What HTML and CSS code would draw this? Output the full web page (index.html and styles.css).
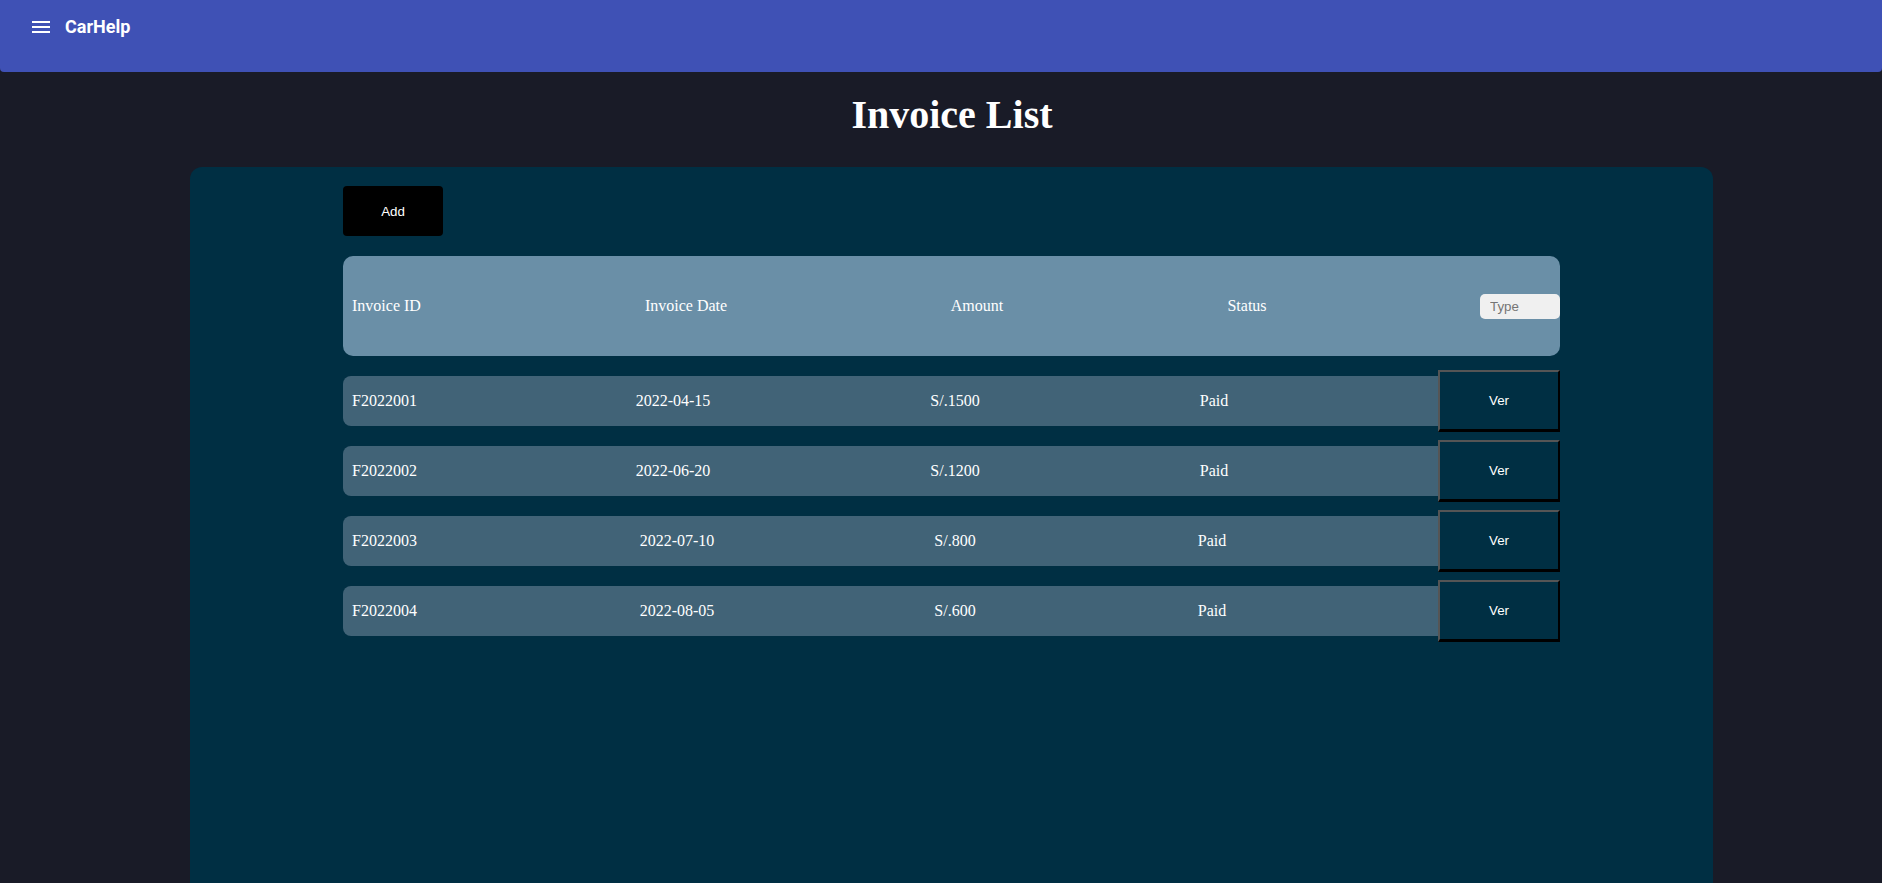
FILE: index.html
```html
<!DOCTYPE html>
<html lang="en">
<head>
<meta charset="utf-8">
<title>CarHelp - Invoice List</title>
<link rel="stylesheet" href="styles.css">
</head>
<body>
<header class="toolbar">
  <svg class="menu-icon" viewBox="0 0 24 24" width="24" height="24" aria-hidden="true"><path fill="#fff" d="M3 18h18v-2H3v2zm0-5h18v-2H3v2zm0-7v2h18V6H3z"/></svg>
  <span class="brand">CarHelp</span>
</header>
<h1 class="title">Invoice List</h1>
<main class="card">
  <div class="inner">
    <button class="add-btn">Add</button>
    <div class="thead">
      <span class="c-id">Invoice ID</span>
      <span class="c-date">Invoice Date</span>
      <span class="c-amount">Amount</span>
      <span class="c-status">Status</span>
      <input class="type-input" type="text" placeholder="Type">
    </div>
    <div class="rows">
      <div class="row">
        <div class="cells"><span>F2022001</span><span>2022-04-15</span><span>S/.1500</span><span>Paid</span></div>
        <button class="ver-btn">Ver</button>
      </div>
      <div class="row">
        <div class="cells"><span>F2022002</span><span>2022-06-20</span><span>S/.1200</span><span>Paid</span></div>
        <button class="ver-btn">Ver</button>
      </div>
      <div class="row">
        <div class="cells cells-short"><span>F2022003</span><span>2022-07-10</span><span>S/.800</span><span>Paid</span></div>
        <button class="ver-btn">Ver</button>
      </div>
      <div class="row">
        <div class="cells cells-short"><span>F2022004</span><span>2022-08-05</span><span>S/.600</span><span>Paid</span></div>
        <button class="ver-btn">Ver</button>
      </div>
    </div>
  </div>
</main>
</body>
</html>
```
FILE: styles.css
```css
html, body {
  margin: 0;
  padding: 0;
  background: #191b27;
  font-family: "Liberation Serif", "Times New Roman", serif;
  color: #fff;
  overflow: hidden;
}

.toolbar {
  box-sizing: border-box;
  height: 72px;
  background: #3f51b5;
  display: flex;
  align-items: flex-start;
  padding: 15px 0 0 29px;
  border-radius: 0 0 4px 4px;
}

.menu-icon {
  display: block;
  width: 24px;
  height: 24px;
}

.brand {
  margin-left: 12px;
  font-family: Roboto, "Liberation Sans", sans-serif;
  font-weight: 700;
  font-size: 18px;
  line-height: 24px;
  color: #fff;
}

.title {
  margin: 20px 0 29px;
  padding-left: 22px;
  text-align: center;
  font-size: 40px;
  font-weight: 700;
  line-height: 46px;
  color: #fff;
}

.card {
  display: block;
  box-sizing: border-box;
  width: 1523px;
  min-height: 800px;
  margin-left: 190px;
  background: #002f43;
  border-radius: 12px;
  padding-top: 19px;
}

.inner {
  width: 1217px;
  margin-left: 153px;
}

.add-btn {
  display: block;
  width: 100px;
  height: 50px;
  border: none;
  border-radius: 4px;
  background: #000;
  color: #fff;
  font-family: "Liberation Sans", Arial, sans-serif;
  font-size: 13.33px;
  padding: 0;
}

.thead {
  margin-top: 20px;
  height: 100px;
  background: #6a8fa7;
  border-radius: 10px;
  display: grid;
  grid-template-columns: 200px 268px 314px 226px 1fr;
  align-items: center;
  padding-left: 9px;
  font-size: 16px;
}

.thead span {
  text-align: center;
  white-space: nowrap;
}

.thead .c-id {
  text-align: left;
}

.type-input {
  justify-self: end;
  box-sizing: border-box;
  width: 80px;
  height: 25px;
  border: none;
  border-radius: 5px;
  background: #f0f0f0;
  padding: 0 0 0 10px;
  font-family: "Liberation Sans", Arial, sans-serif;
  font-size: 13.33px;
  color: #333;
  outline: none;
}

.type-input::placeholder {
  color: #757575;
}

.rows {
  margin-top: 14px;
  display: flex;
  flex-direction: column;
  gap: 8px;
}

.row {
  display: flex;
  align-items: center;
  height: 62px;
}

.cells {
  flex: 1;
  height: 50px;
  background: #416377;
  border-radius: 8px 0 0 8px;
  display: grid;
  grid-template-columns: 200px 242px 322px 196px 1fr;
  align-items: center;
  padding-left: 9px;
  font-size: 16px;
}

.cells-short {
  grid-template-columns: 204px 242px 314px 200px 1fr;
}

.cells span {
  text-align: center;
  white-space: nowrap;
}

.cells span:first-child {
  text-align: left;
}

.ver-btn {
  box-sizing: border-box;
  width: 122px;
  height: 62px;
  background: #002f43;
  color: #fff;
  border: 2px solid;
  border-color: #555 #000 #000 #555;
  border-bottom-width: 3px;
  font-family: "Liberation Sans", Arial, sans-serif;
  font-size: 13.33px;
  padding: 0;
}
```
